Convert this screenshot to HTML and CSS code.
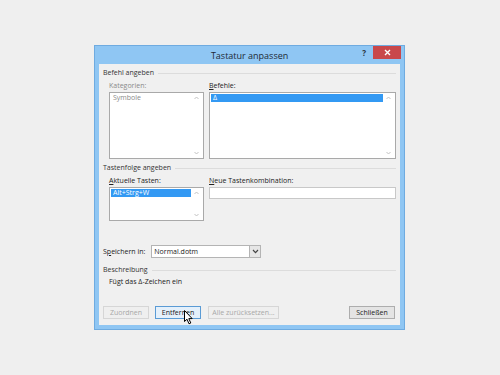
FILE: index.html
```html
<!DOCTYPE html>
<html lang="de">
<head>
    <meta charset="UTF-8">
    <title>Tastatur anpassen</title>
    <link rel="stylesheet" href="styles.css">
</head>
<body>
    <div class="dialog">
        <div class="titlebar">
            <span class="title">Tastatur anpassen</span>
            <span class="help">?</span>
            <span class="close">
                <svg width="7" height="7" viewBox="0 0 7 7"><path d="M1 1 L6 6 M6 1 L1 6" stroke="#fff" stroke-width="1.4"/></svg>
            </span>
        </div>

        <div class="content">
            <div class="group-head"><span>Befehl angeben</span><i></i></div>
            <div class="cols">
                <div class="col col-left">
                    <div class="label disabled">Kategorien:</div>
                    <div class="listbox tall">
                        <div class="items"><div class="item grey">Symbole</div></div>
                        <div class="scroll">
                            <svg width="5" height="4" viewBox="0 0 5 4"><path d="M0.5 3 L2.5 1 L4.5 3" stroke="#c2c2c2" fill="none"/></svg>
                            <svg width="5" height="4" viewBox="0 0 5 4"><path d="M0.5 1 L2.5 3 L4.5 1" stroke="#c2c2c2" fill="none"/></svg>
                        </div>
                    </div>
                </div>
                <div class="col col-right">
                    <div class="label"><u>B</u>efehle:</div>
                    <div class="listbox tall">
                        <div class="items"><div class="item selected">&Delta;</div></div>
                        <div class="scroll">
                            <svg width="5" height="4" viewBox="0 0 5 4"><path d="M0.5 3 L2.5 1 L4.5 3" stroke="#c2c2c2" fill="none"/></svg>
                            <svg width="5" height="4" viewBox="0 0 5 4"><path d="M0.5 1 L2.5 3 L4.5 1" stroke="#c2c2c2" fill="none"/></svg>
                        </div>
                    </div>
                </div>
            </div>

            <div class="group-head second"><span>Tastenfolge angeben</span><i></i></div>
            <div class="cols">
                <div class="col col-left">
                    <div class="label"><u>A</u>ktuelle Tasten:</div>
                    <div class="listbox short">
                        <div class="items"><div class="item selected">Alt+Strg+W</div></div>
                        <div class="scroll">
                            <svg width="5" height="4" viewBox="0 0 5 4"><path d="M0.5 3 L2.5 1 L4.5 3" stroke="#c2c2c2" fill="none"/></svg>
                            <svg width="5" height="4" viewBox="0 0 5 4"><path d="M0.5 1 L2.5 3 L4.5 1" stroke="#c2c2c2" fill="none"/></svg>
                        </div>
                    </div>
                </div>
                <div class="col col-right">
                    <div class="label"><u>N</u>eue Tastenkombination:</div>
                    <div class="textbox"></div>
                </div>
            </div>

            <div class="save-row">
                <span class="save-label">S<u>p</u>eichern in:</span>
                <div class="combo">
                    <span class="combo-value">Normal.dotm</span>
                    <span class="combo-btn">
                        <svg width="7" height="5" viewBox="0 0 7 5"><path d="M1 1 L3.5 3.6 L6 1" stroke="#444" stroke-width="1.2" fill="none"/></svg>
                    </span>
                </div>
            </div>

            <div class="group-head third"><span>Beschreibung</span><i></i></div>
            <div class="desc">Fügt das &Delta;-Zeichen ein</div>

            <div class="buttons">
                <button class="btn" disabled>Zuordnen</button>
                <button class="btn focus">Entfernen
                    <svg class="cursor" width="10" height="15" viewBox="0 0 10 15"><path d="M0.5 0.5 L0.5 11.5 L3 9.2 L5 13.8 L6.8 13 L4.8 8.6 L8.2 8.6 Z" fill="#fff" stroke="#000" stroke-width="1"/></svg>
                </button>
                <button class="btn wide" disabled>Alle zurücksetzen...</button>
                <span class="spacer"></span>
                <button class="btn">Schließen</button>
            </div>
        </div>
    </div>
</body>
</html>
```

FILE: styles.css
```css
body {
    margin: 0;
    padding: 0;
    background-color: #efefef;
    font-family: "Open Sans", "Noto Sans", sans-serif;
    font-size: 7px;
    color: #222;
}

.dialog {
    margin: 45px 0 0 94px;
    width: 311px;
    height: 285px;
    box-sizing: border-box;
    background-color: #8fc6f3;
    border: 1px solid #6fabe0;
    padding: 0 4px 4px 4px;
    display: flex;
    flex-direction: column;
}

.titlebar {
    height: 18px;
    display: flex;
    align-items: flex-start;
}

.titlebar .title {
    flex: 1;
    text-align: center;
    font-size: 9px;
    line-height: 20px;
    color: #1e2a36;
    margin-left: 38px;
}

.titlebar .help {
    font-size: 8px;
    font-weight: bold;
    color: #2a3440;
    line-height: 14px;
    margin-right: 7px;
}

.titlebar .close {
    width: 28px;
    height: 13px;
    background-color: #c9484b;
    display: flex;
    align-items: center;
    justify-content: center;
    margin-right: -1px;
}

.content {
    flex: 1;
    background-color: #f0f0f0;
    padding: 4px 4px 0 4px;
    display: flex;
    flex-direction: column;
}

.group-head {
    display: flex;
    align-items: center;
    line-height: 10px;
    color: #333;
}

.group-head i {
    flex: 1;
    height: 1px;
    background-color: #dcdcdc;
    margin-left: 4px;
}

.group-head.second {
    margin-top: 4px;
}

.group-head.third {
    margin-top: 7px;
}

.cols {
    display: flex;
    gap: 5px;
    padding-left: 6px;
    margin-top: 3px;
}

.col-left {
    width: 95px;
}

.col-right {
    flex: 1;
}

.label {
    line-height: 10px;
    margin-bottom: 1px;
    color: #222;
}

.label.disabled {
    color: #8a8a8a;
}

.listbox {
    box-sizing: border-box;
    border: 1px solid #a9a9a9;
    background-color: #fff;
    display: flex;
    padding: 1px;
}

.listbox.tall {
    height: 67px;
}

.listbox.short {
    height: 34px;
}

.listbox .items {
    flex: 1;
}

.listbox .item {
    line-height: 8px;
    padding-left: 2px;
}

.listbox .item.grey {
    color: #8a8a8a;
}

.listbox .item.selected {
    background-color: #3399f3;
    color: #fff;
}

.listbox .scroll {
    width: 11px;
    display: flex;
    flex-direction: column;
    justify-content: space-between;
    align-items: center;
    padding: 2px 0;
}

.textbox {
    height: 12px;
    box-sizing: border-box;
    border: 1px solid #c8c8c8;
    background-color: #fff;
}

.save-row {
    display: flex;
    align-items: center;
    margin-top: 24px;
    gap: 6px;
}

.combo {
    width: 110px;
    height: 13px;
    box-sizing: border-box;
    border: 1px solid #b4b4b4;
    background-color: #fff;
    display: flex;
}

.combo-value {
    flex: 1;
    line-height: 11px;
    padding-left: 2px;
}

.combo-btn {
    width: 10px;
    border-left: 1px solid #b4b4b4;
    background-color: #e6e6e6;
    display: flex;
    align-items: center;
    justify-content: center;
}

.desc {
    margin-top: 2px;
    padding-left: 6px;
    line-height: 10px;
}

.buttons {
    display: flex;
    margin-top: 19px;
    gap: 6px;
    padding-right: 1px;
}

.spacer {
    flex: 1;
}

.btn {
    width: 46px;
    height: 13px;
    box-sizing: border-box;
    padding: 0;
    font-family: "Open Sans", "Noto Sans", sans-serif;
    font-size: 7px;
    line-height: 11px;
    border: 1px solid #adadad;
    background-color: #e4e4e4;
    color: #222;
    position: relative;
}

.btn.wide {
    width: 71px;
    margin-left: 1px;
}

.btn:disabled {
    border-color: #d6d6d6;
    background-color: #efefef;
    color: #a8a8a8;
}

.btn.focus {
    background-color: #e4f0fb;
    border-color: #5a9bd5;
}

.cursor {
    position: absolute;
    left: 28px;
    top: 3px;
}
```
